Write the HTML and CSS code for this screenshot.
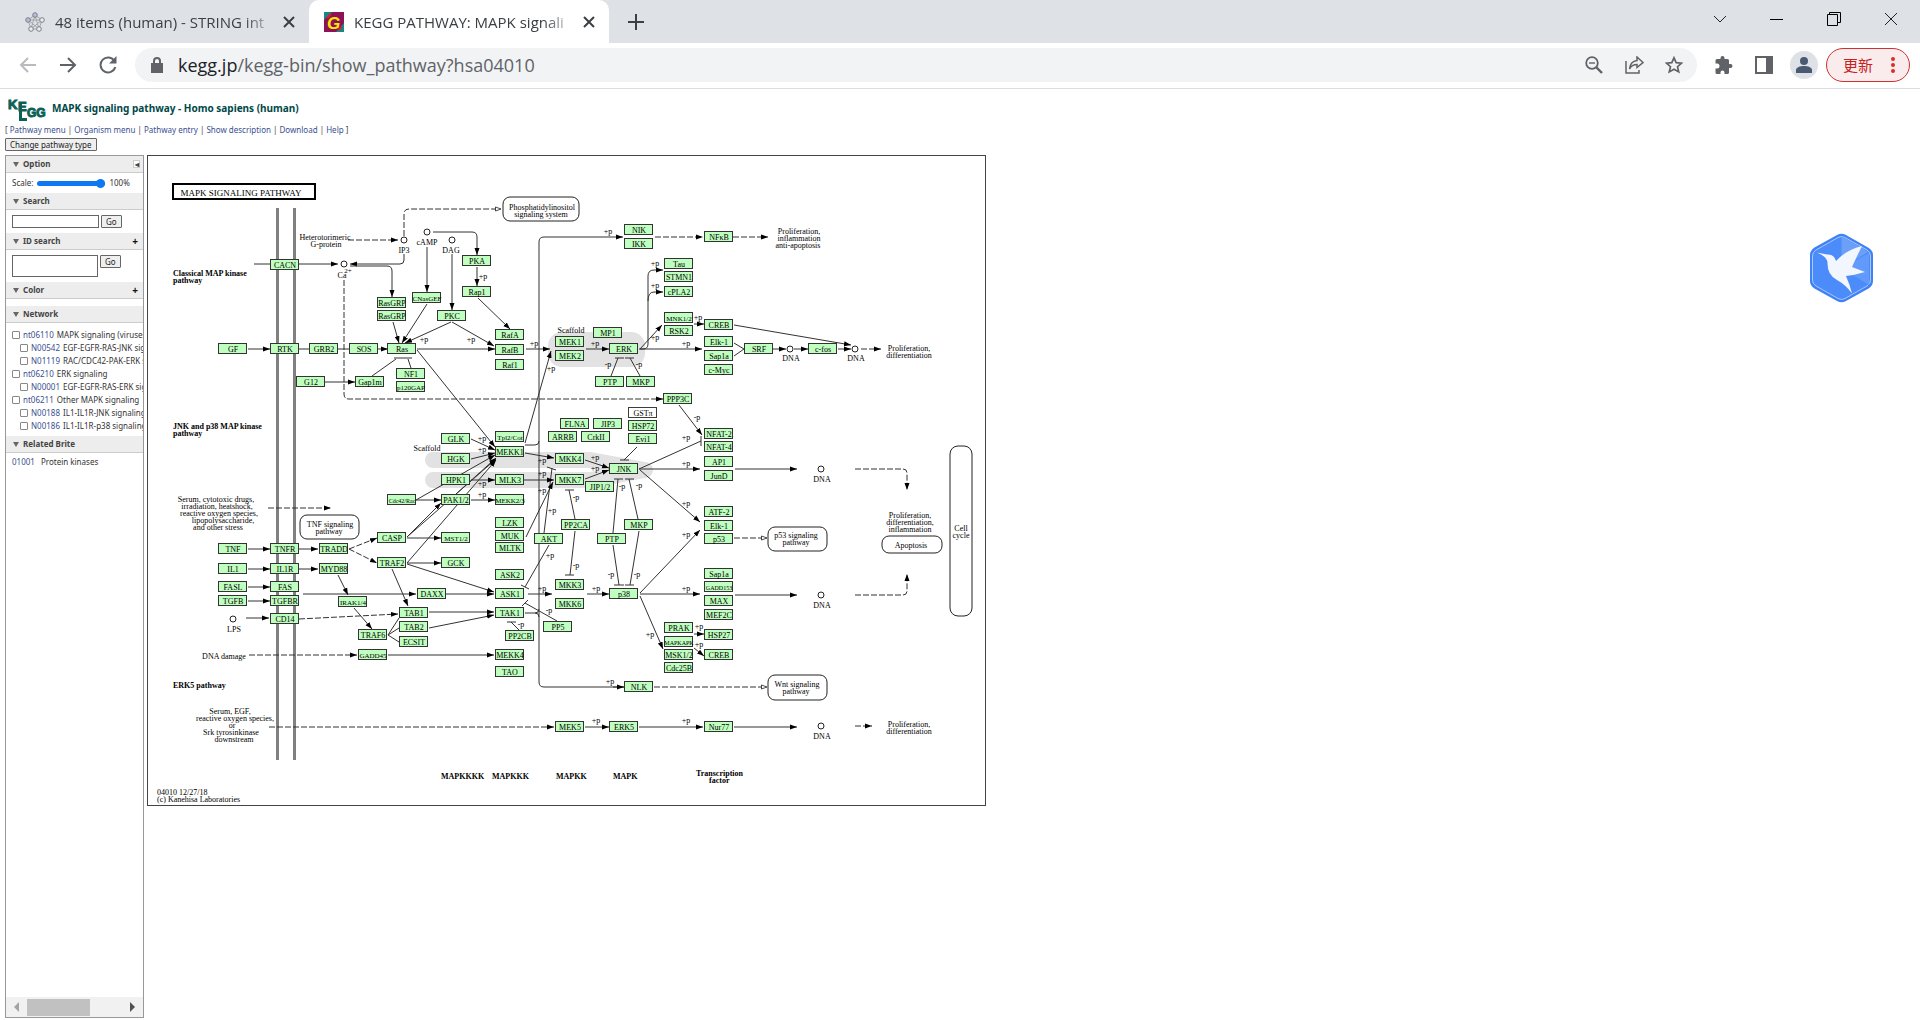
FILE: index.html
```html
<!DOCTYPE html>
<html lang="en">
<head>
<meta charset="utf-8">
<title>KEGG PATHWAY: MAPK signaling pathway - Homo sapiens (human)</title>
<link rel="stylesheet" href="styles.css">
</head>
<body>
<header class="browser">
  <div class="tabstrip">
    <div class="tab">
      <svg class="favicon" viewBox="0 0 20 20" aria-hidden="true"><path d="M10 3 3 8l3 9h8l3-9zM10 3 6 17M10 3l4 14M3 8h14L6 17M3 8l11 9" fill="none" stroke="#a3a6ab"/><g fill="#eceef1" stroke="#7d8085"><circle cx="10" cy="3" r="2.3" fill="#b4bde6"/><circle cx="3" cy="8" r="2.3" fill="#b4bde6"/><circle cx="17" cy="8" r="2.3"/><circle cx="6" cy="17" r="2.3"/><circle cx="14" cy="17" r="2.3"/></g></svg>
      <span class="tab-title">48 items (human) - STRING int</span>
      <button class="icon-btn" aria-label="Close tab"><svg width="12" height="12" viewBox="0 0 12 12"><path d="m1 1 10 10M11 1 1 11" stroke="#3c4043" stroke-width="2"/></svg></button>
    </div>
    <div class="tab active">
      <svg class="favicon" viewBox="0 0 20 20" aria-hidden="true"><path fill="#8e1256" d="M0 0h20v20H0z"/><path fill="#138a8a" d="M0 0h8L0 8zM12 20h8v-9z"/><path d="M3 6 7 2M14 18l4-3" stroke="#e02020" stroke-width="2"/><text x="3" y="17" class="fav-letter">G</text></svg>
      <span class="tab-title">KEGG PATHWAY: MAPK signali</span>
      <button class="icon-btn" aria-label="Close tab"><svg width="12" height="12" viewBox="0 0 12 12"><path d="m1 1 10 10M11 1 1 11" stroke="#3c4043" stroke-width="2"/></svg></button>
    </div>
    <button class="icon-btn new-tab" aria-label="New tab"><svg width="16" height="16" viewBox="0 0 16 16"><path d="M8 0v16M0 8h16" stroke="#3c4043" stroke-width="2"/></svg></button>
    <div class="window-controls">
      <button class="icon-btn" aria-label="Search tabs"><svg width="14" height="14" viewBox="0 0 14 14"><path d="m1 4 6 6 6-6" fill="none" stroke="#222"/></svg></button>
      <button class="icon-btn" aria-label="Minimize"><svg width="14" height="14" viewBox="0 0 14 14"><path d="M0 7.5h13" stroke="#000"/></svg></button>
      <button class="icon-btn" aria-label="Restore"><svg width="14" height="14" viewBox="0 0 14 14"><path d="M.5 2.5h10v11H.5zM2.5 2.5v-2h11v10h-3" fill="none" stroke="#000"/></svg></button>
      <button class="icon-btn" aria-label="Close"><svg width="14" height="14" viewBox="0 0 14 14"><path d="m1 1 12 12M13 1 1 13" stroke="#222"/></svg></button>
    </div>
  </div>
  <div class="toolbar">
    <button class="icon-btn nav" aria-label="Back"><svg width="18" height="18" viewBox="0 0 18 18"><path d="M17 9H2M9 2 2 9l7 7" fill="none" stroke="#b9bbbe" stroke-width="2"/></svg></button>
    <button class="icon-btn nav" aria-label="Forward"><svg width="18" height="18" viewBox="0 0 18 18"><path d="M1 9h15M9 2l7 7-7 7" fill="none" stroke="#5f6368" stroke-width="2"/></svg></button>
    <button class="icon-btn nav" aria-label="Reload"><svg width="18" height="18" viewBox="0 0 18 18"><path d="M15.5 5A7.5 7.5 0 1 0 16.300 11" fill="none" stroke="#5f6368" stroke-width="2"/><path d="M17.500 0v7.500H10z" fill="#5f6368"/></svg></button>
    <div class="omnibox">
      <svg width="12" height="16" viewBox="0 0 12 16" aria-hidden="true"><path d="M0 6h12v10H0z" fill="#5f6368"/><path d="M3 7V4a3 3 0 0 1 6 0v3" fill="none" stroke="#5f6368" stroke-width="2"/></svg>
      <a class="url" href="#top"><b>kegg.jp</b>/kegg-bin/show_pathway?hsa04010</a>
      <button class="icon-btn" aria-label="Zoom"><svg width="18" height="18" viewBox="0 0 18 18"><circle cx="7" cy="7" r="5.800" fill="none" stroke="#5f6368" stroke-width="1.800"/><path d="m11 11 6 6" stroke="#5f6368" stroke-width="2.400"/><path d="M4 7h6" stroke="#5f6368" stroke-width="1.400"/></svg></button>
      <button class="icon-btn" aria-label="Share"><svg width="19" height="18" viewBox="0 0 19 18"><path d="M1 5v12h13v-3M12 4.500V1l6 5.500-6 5V8.500C8 8.500 6 10 4.500 13 5 8 8 5 12 4.500z" fill="none" stroke="#5f6368" stroke-width="1.500"/></svg></button>
      <button class="icon-btn" aria-label="Bookmark"><svg width="18" height="18" viewBox="0 0 18 18"><path d="m9 1.800 2.200 4.900 5.300.5-4 3.500 1.200 5.200L9 13.200l-4.700 2.700 1.200-5.200-4-3.500 5.300-.5z" fill="none" stroke="#5f6368" stroke-width="1.700"/></svg></button>
    </div>
    <button class="icon-btn ext" aria-label="Extensions"><svg width="18" height="18" viewBox="0 0 18 18"><path fill="#5f6368" d="M15.500 8H14V4.500A1.500 1.500 0 0 0 12.500 3H9.500V2a2 2 0 0 0-4 0v1H2A1.500 1.500 0 0 0 .500 4.500v3H2a2 2 0 0 1 0 5H.500v4A1.500 1.500 0 0 0 2 18h3.500v-1.500a2 2 0 0 1 4 0V18h3a1.500 1.500 0 0 0 1.500-1.500V12h1.500a2 2 0 0 0 0-4z"/></svg></button>
    <button class="icon-btn ext" aria-label="Side panel"><svg width="18" height="18" viewBox="0 0 18 18"><path fill="#5f6368" fill-rule="evenodd" d="M0 0h18v18H0zM2 2v14h9V2z"/></svg></button>
    <button class="icon-btn avatar" aria-label="Profile"><svg width="16" height="16" viewBox="0 0 16 16"><circle cx="8" cy="4" r="4" fill="#4a5a73"/><path d="M0 16v-3c0-2.500 4-4 8-4s8 1.500 8 4v3z" fill="#4a5a73"/></svg></button>
    <button class="update">更新<svg width="4" height="16" viewBox="0 0 4 16" aria-hidden="true"><g fill="#d93025"><circle cx="2" cy="2" r="2"/><circle cx="2" cy="8" r="2"/><circle cx="2" cy="14" r="2"/></g></svg></button>
  </div>
</header>

<main id="top">
  <div class="title-row">
    <svg class="logo" width="38" height="25" viewBox="0 0 38 25" role="img" aria-label="KEGG"><text x="0" y="12" class="logo-k">K</text><text x="10" y="14" class="logo-e">E</text><path d="M11 5h3v16h5v3h-8z"/><text x="19" y="20" class="logo-g">GG</text></svg>
    <h1>MAPK signaling pathway - Homo sapiens (human)</h1>
  </div>
  <nav class="links">[ <a href="#menu">Pathway menu</a> | <a href="#org">Organism menu</a> | <a href="#entry">Pathway entry</a> | <a href="#desc">Show description</a> | <a href="#dl">Download</a> | <a href="#help">Help</a> ]</nav>
  <button class="plain-btn change">Change pathway type</button>

  <div class="workspace">
    <aside class="panel">
      <h2>Option<button class="collapse" aria-label="Collapse panel">◂</button></h2>
      <div class="row scale"><label for="scale">Scale:</label><input id="scale" type="range" min="10" max="100" value="100"><output>100%</output></div>
      <h2>Search</h2>
      <div class="row form"><input type="text" aria-label="Search"><button class="plain-btn">Go</button></div>
      <h2>ID search<span class="plus">+</span></h2>
      <div class="row form"><textarea aria-label="ID search"></textarea><button class="plain-btn">Go</button></div>
      <h2>Color<span class="plus">+</span></h2>
      <div class="spacer"></div>
      <h2>Network</h2>
      <ul class="network">
        <li><input type="checkbox" id="n1"><label for="n1"><a href="#n">nt06110</a> MAPK signaling (viruses)</label></li>
        <li class="sub"><input type="checkbox" id="n2"><label for="n2"><a href="#n">N00542</a> EGF-EGFR-RAS-JNK signaling</label></li>
        <li class="sub"><input type="checkbox" id="n3"><label for="n3"><a href="#n">N01119</a> RAC/CDC42-PAK-ERK signaling</label></li>
        <li><input type="checkbox" id="n4"><label for="n4"><a href="#n">nt06210</a> ERK signaling</label></li>
        <li class="sub"><input type="checkbox" id="n5"><label for="n5"><a href="#n">N00001</a> EGF-EGFR-RAS-ERK signaling</label></li>
        <li><input type="checkbox" id="n6"><label for="n6"><a href="#n">nt06211</a> Other MAPK signaling</label></li>
        <li class="sub"><input type="checkbox" id="n7"><label for="n7"><a href="#n">N00188</a> IL1-IL1R-JNK signaling</label></li>
        <li class="sub"><input type="checkbox" id="n8"><label for="n8"><a href="#n">N00186</a> IL1-IL1R-p38 signaling</label></li>
      </ul>
      <h2>Related Brite</h2>
      <p class="brite"><a href="#b">01001</a> Protein kinases</p>
      <div class="scrollbar" aria-hidden="true"><i class="arrow-left"></i><span class="thumb"></span><i class="arrow-right"></i></div>
    </aside>

    <svg class="pathway" width="839" height="651" viewBox="147 155 839 651" role="img" aria-label="MAPK signaling pathway map">
      <defs>
        <rect id="g" class="gene" x="-14.500" y="-5.500" width="28" height="10"/>
        <circle id="c" class="shape" r="3"/>
        <marker id="a" viewBox="0 0 7 6" refX="7" refY="3" markerWidth="7" markerHeight="6" markerUnits="userSpaceOnUse" orient="auto"><path d="M0 .500 7 3 0 5.500z"/></marker>
        <marker id="o" viewBox="0 0 7 6" refX="1" refY="3" markerWidth="7" markerHeight="6" markerUnits="userSpaceOnUse" orient="auto"><path d="M.500 1 6 3 .500 5z" fill="#fff" stroke="#000" stroke-width=".700"/></marker>
      </defs>

      <g class="scaffold"><rect x="548" y="332" width="97" height="35" rx="14"/><path d="M433 460H590L645 470M433 480H590L645 470"/></g>
      <path class="membrane" d="M277.500 208V760M294.500 208V760"/>

      <g class="shape">
        <rect x="173" y="184" width="142" height="15" class="title-box"/>
        <rect x="503" y="197" width="76" height="24" rx="7"/>
        <rect x="300" y="515" width="59" height="24" rx="7"/>
        <rect x="768" y="527" width="59" height="24" rx="7"/>
        <rect x="768" y="675" width="59" height="25" rx="7"/>
        <rect x="882" y="536" width="60" height="17" rx="7"/>
        <rect x="950" y="446" width="22" height="170" rx="8"/>
      </g>

      <g class="edge">
        <path d="M254 264H270"/><path d="M299 349H309M338 349H349"/>
        <path d="M372 376 396 359M411 368 408 359M394 358H412"/>
        <path d="M611 376 618 358M615 358H624M640 376 630 358M625 358H634"/>
        <path d="M525 445H535q4 0 4-4"/><path d="M525 613H535q4 0 4 4M535 613q4 0 4-4"/>
        <path d="M734 343 744 349 734 356"/>
        <path d="M639 469 701 441M701 436V446"/>
        <path d="M637 447 624 460M620 460H629"/>
        <path d="M613 533 618 479M614 479H623M638 519 629 479M625 479H634M613 545 619 585M614 585H624M639 531 630 585M625 585H634"/>
        <path d="M575 519 569 490M565 490H574M575 531 570 575M565 575H574"/>
        <path d="M544 533 552 468M547 467 556 470M549 545 525 587M521 585 529 589"/>
        <path d="M388 635 399 618M388 635 399 628M388 635 399 642"/>
        <path d="M519 630 511 622M507 622H516M557 621 525 603M522 606 528 600"/>
      </g>

      <g class="edge arrow">
        <path d="M299 264H338"/><path d="M404 254V260q0 4-4 4H350"/><path d="M350 266H387q5 0 5 5V297"/>
        <path d="M433 232H472q5 0 5 5V255"/><path d="M427 247V292"/><path d="M452 254V310"/><path d="M477 267V286"/><path d="M478 298 510 329"/>
        <path d="M393 322 399 343"/><path d="M427 304 402 343"/><path d="M451 322 405 343"/><path d="M452 322 494 346"/>
        <path d="M248 349H270"/><path d="M378 349H388"/><path d="M417 349H495"/><path d="M325 382H355"/>
        <path d="M417 350 495 447"/><path d="M526 349H550"/><path d="M525 443 551 351"/>
        <path d="M624 687H544q-5 0-5-5V242q0-5 5-5H623"/>
        <path d="M613 687H624"/>
        <path d="M640 349H643q5 0 5-5V276q0-6 6-6H663"/><path d="M648 301q0-9 6-9H663"/><path d="M640 349 662 325"/><path d="M639 349H702"/><path d="M694 324H704"/>
        <path d="M734 325 851 345"/><path d="M773 349H786"/><path d="M794 349H808"/><path d="M838 349H851"/><path d="M586 349H609"/>
        <path d="M679 405 702 435"/><path d="M639 469H700"/><path d="M640 470 700 522"/><path d="M640 593 700 530"/><path d="M640 594H700"/><path d="M640 596 663 649"/>
        <path d="M735 469H797"/><path d="M735 595H797"/><path d="M694 634H704"/><path d="M694 648 704 656"/>
        <path d="M526 537 553 482"/><path d="M524 480H554"/><path d="M525 453 554 458"/><path d="M585 460 609 468"/><path d="M585 479 609 470"/>
        <path d="M471 439 495 450"/><path d="M471 459 495 453"/><path d="M471 480H495"/><path d="M416 500 495 455"/><path d="M416 500H441"/><path d="M456 494 496 458"/><path d="M471 500H495"/>
        <path d="M407 537 441 503"/><path d="M407 537 496 459"/><path d="M407 538H441"/><path d="M407 563 496 460"/><path d="M407 563H441"/><path d="M407 564 494 592"/><path d="M392 569 408 606"/>
        <path d="M303 594H416"/><path d="M446 594H494"/><path d="M528 594H552"/><path d="M587 594H609"/><path d="M429 612H494"/><path d="M429 628 494 615"/><path d="M388 655H494"/>
        <path d="M248 549H270"/><path d="M248 569H270"/><path d="M248 587H270"/><path d="M248 601H270"/><path d="M246 618H269"/><path d="M299 549H318"/><path d="M299 569H318"/>
        <path d="M338 575 348 595"/><path d="M354 608 372 629"/>
        <path d="M585 727H609"/><path d="M639 727H703"/><path d="M734 727H797"/>
      </g>
      <g class="edge arrow dashed">
        <path d="M348 240H398"/><path d="M344 280V394q0 5 5 5H663"/><path d="M655 237H703"/><path d="M733 237H768"/><path d="M861 349H881"/>
        <path d="M855 469H903q4 0 4 4V490"/><path d="M855 595H903q4 0 4-4V574"/>
        <path d="M299 619 398 614"/><path d="M349 549 377 538"/><path d="M349 549 377 563"/><path d="M249 655H357"/><path d="M268 508H331"/><path d="M269 727H554"/><path d="M855 726H872"/>
      </g>
      <g class="edge open dashed"><path d="M404 236V214q0-5 5-5H496"/><path d="M734 538H762"/><path d="M654 687H762"/></g>

      <use href="#c" x="344" y="264"/><use href="#c" x="404" y="240"/><use href="#c" x="427" y="232"/><use href="#c" x="452" y="240"/><use href="#c" x="790" y="349"/><use href="#c" x="855" y="349"/><use href="#c" x="821" y="469"/><use href="#c" x="821" y="595"/><use href="#c" x="821" y="726"/><use href="#c" x="233" y="619"/>

      <g class="names">
        <use href="#g" x="285" y="265"/><text x="285" y="268">CACN</text>
        <use href="#g" x="233" y="349"/><text x="233" y="352">GF</text>
        <use href="#g" x="285" y="349"/><text x="285" y="352">RTK</text>
        <use href="#g" x="324" y="349"/><text x="324" y="352">GRB2</text>
        <use href="#g" x="364" y="349"/><text x="364" y="352">SOS</text>
        <use href="#g" x="402" y="349"/><text x="402" y="352">Ras</text>
        <use href="#g" x="311" y="382"/><text x="311" y="385">G12</text>
        <use href="#g" x="370" y="382"/><text x="370" y="385">Gap1m</text>
        <use href="#g" x="392" y="303"/><text x="392" y="306">RasGRP</text>
        <use href="#g" x="392" y="316"/><text x="392" y="319">RasGRP</text>
        <use href="#g" x="427" y="298"/><text x="427" y="301" class="long">CNasGEF</text>
        <use href="#g" x="452" y="316"/><text x="452" y="319">PKC</text>
        <use href="#g" x="477" y="261"/><text x="477" y="264">PKA</text>
        <use href="#g" x="477" y="292"/><text x="477" y="295">Rap1</text>
        <use href="#g" x="411" y="374"/><text x="411" y="377">NF1</text>
        <use href="#g" x="411" y="387"/><text x="411" y="390" class="long">p120GAP</text>
        <use href="#g" x="510" y="335"/><text x="510" y="338">RafA</text>
        <use href="#g" x="510" y="350"/><text x="510" y="353">RafB</text>
        <use href="#g" x="510" y="365"/><text x="510" y="368">Raf1</text>
        <use href="#g" x="570" y="342"/><text x="570" y="345">MEK1</text>
        <use href="#g" x="570" y="356"/><text x="570" y="359">MEK2</text>
        <use href="#g" x="608" y="333"/><text x="608" y="336">MP1</text>
        <use href="#g" x="624" y="349"/><text x="624" y="352">ERK</text>
        <use href="#g" x="610" y="382"/><text x="610" y="385">PTP</text>
        <use href="#g" x="641" y="382"/><text x="641" y="385">MKP</text>
        <use href="#g" x="639" y="230"/><text x="639" y="233">NIK</text>
        <use href="#g" x="639" y="244"/><text x="639" y="247">IKK</text>
        <use href="#g" x="719" y="237"/><text x="719" y="240">NFκB</text>
        <use href="#g" x="679" y="264"/><text x="679" y="267">Tau</text>
        <use href="#g" x="679" y="277"/><text x="679" y="280">STMN1</text>
        <use href="#g" x="679" y="292"/><text x="679" y="295">cPLA2</text>
        <use href="#g" x="679" y="318"/><text x="679" y="321" class="long">MNK1/2</text>
        <use href="#g" x="679" y="331"/><text x="679" y="334">RSK2</text>
        <use href="#g" x="719" y="325"/><text x="719" y="328">CREB</text>
        <use href="#g" x="719" y="342"/><text x="719" y="345">Elk-1</text>
        <use href="#g" x="719" y="356"/><text x="719" y="359">Sap1a</text>
        <use href="#g" x="719" y="370"/><text x="719" y="373">c-Myc</text>
        <use href="#g" x="678" y="399"/><text x="678" y="402">PPP3C</text>
        <use href="#g" x="759" y="349"/><text x="759" y="352">SRF</text>
        <use href="#g" x="823" y="349"/><text x="823" y="352">c-fos</text>
        <use href="#g" x="456" y="439"/><text x="456" y="442">GLK</text>
        <use href="#g" x="456" y="459"/><text x="456" y="462">HGK</text>
        <use href="#g" x="456" y="480"/><text x="456" y="483">HPK1</text>
        <use href="#g" x="456" y="500"/><text x="456" y="503">PAK1/2</text>
        <use href="#g" x="456" y="538"/><text x="456" y="541" class="long">MST1/2</text>
        <use href="#g" x="456" y="563"/><text x="456" y="566">GCK</text>
        <use href="#g" x="510" y="437"/><text x="510" y="440" class="long">Tpl2/Cot</text>
        <use href="#g" x="510" y="452"/><text x="510" y="455">MEKK1</text>
        <use href="#g" x="510" y="480"/><text x="510" y="483">MLK3</text>
        <use href="#g" x="510" y="500"/><text x="510" y="503" class="long">MEKK2/3</text>
        <use href="#g" x="510" y="523"/><text x="510" y="526">LZK</text>
        <use href="#g" x="510" y="536"/><text x="510" y="539">MUK</text>
        <use href="#g" x="510" y="548"/><text x="510" y="551">MLTK</text>
        <use href="#g" x="510" y="575"/><text x="510" y="578">ASK2</text>
        <use href="#g" x="510" y="594"/><text x="510" y="597">ASK1</text>
        <use href="#g" x="510" y="613"/><text x="510" y="616">TAK1</text>
        <use href="#g" x="520" y="636"/><text x="520" y="639">PP2CB</text>
        <use href="#g" x="510" y="655"/><text x="510" y="658">MEKK4</text>
        <use href="#g" x="510" y="672"/><text x="510" y="675">TAO</text>
        <use href="#g" x="402" y="500"/><text x="402" y="503" class="longest">Cdc42/Rac</text>
        <use href="#g" x="392" y="538"/><text x="392" y="541">CASP</text>
        <use href="#g" x="392" y="563"/><text x="392" y="566">TRAF2</text>
        <use href="#g" x="432" y="594"/><text x="432" y="597">DAXX</text>
        <use href="#g" x="414" y="613"/><text x="414" y="616">TAB1</text>
        <use href="#g" x="414" y="627"/><text x="414" y="630">TAB2</text>
        <use href="#g" x="414" y="642"/><text x="414" y="645">ECSIT</text>
        <use href="#g" x="575" y="424"/><text x="575" y="427">FLNA</text>
        <use href="#g" x="608" y="424"/><text x="608" y="427">JIP3</text>
        <use href="#g" x="563" y="437"/><text x="563" y="440">ARRB</text>
        <use href="#g" x="596" y="437"/><text x="596" y="440">CrkII</text>
        <use href="#g" x="570" y="459"/><text x="570" y="462">MKK4</text>
        <use href="#g" x="570" y="480"/><text x="570" y="483">MKK7</text>
        <use href="#g" x="624" y="469"/><text x="624" y="472">JNK</text>
        <use href="#g" x="600" y="487"/><text x="600" y="490">JIP1/2</text>
        <use href="#g" x="576" y="525"/><text x="576" y="528">PP2CA</text>
        <use href="#g" x="549" y="539"/><text x="549" y="542">AKT</text>
        <use href="#g" x="612" y="539"/><text x="612" y="542">PTP</text>
        <use href="#g" x="639" y="525"/><text x="639" y="528">MKP</text>
        <use href="#g" x="570" y="585"/><text x="570" y="588">MKK3</text>
        <use href="#g" x="570" y="604"/><text x="570" y="607">MKK6</text>
        <use href="#g" x="558" y="627"/><text x="558" y="630">PP5</text>
        <use href="#g" x="624" y="594"/><text x="624" y="597">p38</text>
        <use href="#g" x="643" y="413" class="plain"/><text x="643" y="416">GSTπ</text>
        <use href="#g" x="643" y="426"/><text x="643" y="429">HSP72</text>
        <use href="#g" x="643" y="439"/><text x="643" y="442">Evi1</text>
        <use href="#g" x="719" y="434"/><text x="719" y="437">NFAT-2</text>
        <use href="#g" x="719" y="447"/><text x="719" y="450">NFAT-4</text>
        <use href="#g" x="719" y="462"/><text x="719" y="465">AP1</text>
        <use href="#g" x="719" y="476"/><text x="719" y="479">JunD</text>
        <use href="#g" x="719" y="512"/><text x="719" y="515">ATF-2</text>
        <use href="#g" x="719" y="526"/><text x="719" y="529">Elk-1</text>
        <use href="#g" x="719" y="539"/><text x="719" y="542">p53</text>
        <use href="#g" x="719" y="574"/><text x="719" y="577">Sap1a</text>
        <use href="#g" x="719" y="587"/><text x="719" y="590" class="longest">GADD153</text>
        <use href="#g" x="719" y="601"/><text x="719" y="604">MAX</text>
        <use href="#g" x="719" y="615"/><text x="719" y="618">MEF2C</text>
        <use href="#g" x="679" y="628"/><text x="679" y="631">PRAK</text>
        <use href="#g" x="679" y="642"/><text x="679" y="645" class="longest">MAPKAPK</text>
        <use href="#g" x="679" y="655"/><text x="679" y="658">MSK1/2</text>
        <use href="#g" x="679" y="668"/><text x="679" y="671">Cdc25B</text>
        <use href="#g" x="719" y="635"/><text x="719" y="638">HSP27</text>
        <use href="#g" x="719" y="655"/><text x="719" y="658">CREB</text>
        <use href="#g" x="233" y="549"/><text x="233" y="552">TNF</text>
        <use href="#g" x="233" y="569"/><text x="233" y="572">IL1</text>
        <use href="#g" x="233" y="587"/><text x="233" y="590">FASL</text>
        <use href="#g" x="233" y="601"/><text x="233" y="604">TGFB</text>
        <use href="#g" x="285" y="549"/><text x="285" y="552">TNFR</text>
        <use href="#g" x="285" y="569"/><text x="285" y="572">IL1R</text>
        <use href="#g" x="285" y="587"/><text x="285" y="590">FAS</text>
        <use href="#g" x="285" y="601"/><text x="285" y="604">TGFBR</text>
        <use href="#g" x="285" y="619"/><text x="285" y="622">CD14</text>
        <use href="#g" x="334" y="549"/><text x="334" y="552">TRADD</text>
        <use href="#g" x="334" y="569"/><text x="334" y="572">MYD88</text>
        <use href="#g" x="353" y="602"/><text x="353" y="605" class="long">IRAK1/4</text>
        <use href="#g" x="373" y="635"/><text x="373" y="638">TRAF6</text>
        <use href="#g" x="373" y="655"/><text x="373" y="658" class="long">GADD45</text>
        <use href="#g" x="639" y="687"/><text x="639" y="690">NLK</text>
        <use href="#g" x="570" y="727"/><text x="570" y="730">MEK5</text>
        <use href="#g" x="624" y="727"/><text x="624" y="730">ERK5</text>
        <use href="#g" x="719" y="727"/><text x="719" y="730">Nur77</text>
      </g>

      <g class="names">
        <text x="483" y="279">+p</text><text x="424" y="342">+p</text><text x="471" y="342">+p</text><text x="608" y="234">+p</text><text x="655" y="266">+p</text><text x="655" y="288">+p</text><text x="698" y="320">+p</text><text x="655" y="340">+p</text><text x="686" y="346">+p</text><text x="595" y="346">+p</text><text x="534" y="346">+p</text><text x="551" y="371">+p</text><text x="608" y="367">-p</text><text x="639" y="367">-p</text><text x="697" y="420">-p</text><text x="686" y="440">+p</text><text x="686" y="466">+p</text><text x="686" y="506">+p</text><text x="686" y="537">+p</text><text x="686" y="591">+p</text><text x="650" y="637">+p</text><text x="699" y="629">+p</text><text x="699" y="647">+p</text><text x="639" y="488">-p</text><text x="637" y="577">-p</text><text x="482" y="441">+p</text><text x="482" y="452">+p</text><text x="482" y="486">+p</text><text x="482" y="497">+p</text><text x="542" y="463">+p</text><text x="542" y="476">+p</text><text x="542" y="493">+p</text><text x="552" y="513">+p</text><text x="550" y="558">+p</text><text x="595" y="460">+p</text><text x="595" y="471">+p</text><text x="576" y="500">-p</text><text x="576" y="568">-p</text><text x="622" y="489">-p</text><text x="611" y="577">-p</text><text x="542" y="591">+p</text><text x="596" y="591">+p</text><text x="549" y="613">-p</text><text x="521" y="627">-p</text><text x="610" y="684">+p</text><text x="596" y="723">+p</text><text x="686" y="723">+p</text>
        <text x="542" y="210">Phosphatidylinositol</text><text x="541" y="217">signaling system</text>
        <text x="325" y="240">Heterotorimeric</text><text x="326" y="247">G-protein</text>
        <text x="404" y="253">IP3</text><text x="427" y="245">cAMP</text><text x="451" y="253">DAG</text><text x="342" y="278">Ca</text><text x="348" y="273" class="long">2+</text>
        <text x="571" y="333">Scaffold</text><text x="427" y="451">Scaffold</text>
        <text x="799" y="234">Proliferation,</text><text x="799" y="241">inflammation</text><text x="798" y="248">anti-apoptosis</text>
        <text x="791" y="361">DNA</text><text x="856" y="361">DNA</text><text x="909" y="351">Proliferation,</text><text x="909" y="358">differentiation</text>
        <text x="822" y="482">DNA</text><text x="822" y="608">DNA</text><text x="822" y="739">DNA</text>
        <text x="910" y="518">Proliferation,</text><text x="910" y="525">differentiation,</text><text x="910" y="532">inflammation</text><text x="911" y="548">Apoptosis</text>
        <text x="961" y="531">Cell</text><text x="961" y="538">cycle</text>
        <text x="796" y="538">p53 signaling</text><text x="796" y="545">pathway</text>
        <text x="797" y="687">Wnt signaling</text><text x="796" y="694">pathway</text>
        <text x="909" y="727">Proliferation,</text><text x="909" y="734">differentiation</text>
        <text x="330" y="527">TNF signaling</text><text x="329" y="534">pathway</text>
        <text x="216" y="502">Serum, cytotoxic drugs,</text><text x="217" y="509">irradiation, heatshock,</text><text x="219" y="516">reactive oxygen species,</text><text x="223" y="523">lipopolysaccharide,</text><text x="218" y="530">and other stress</text>
        <text x="234" y="632">LPS</text><text x="224" y="659">DNA damage</text>
        <text x="230" y="714">Serum, EGF,</text><text x="235" y="721">reactive oxygen species,</text><text x="232" y="728">or</text><text x="231" y="735">Srk tyrosinkinase</text><text x="234" y="742">downstream</text>
        <text x="241" y="196" class="map-title">MAPK SIGNALING PATHWAY</text>
      </g>
      <g class="heads">
        <text x="173" y="276">Classical MAP kinase</text><text x="173" y="283">pathway</text>
        <text x="173" y="429">JNK and p38 MAP kinase</text><text x="173" y="436">pathway</text>
        <text x="173" y="688">ERK5 pathway</text>
        <text x="441" y="779">MAPKKKK</text><text x="492" y="779">MAPKKK</text><text x="556" y="779">MAPKK</text><text x="613" y="779">MAPK</text>
        <text x="696" y="776">Transcription</text><text x="709" y="783">factor</text>
      </g>
      <g class="credit"><text x="157" y="795">04010 12/27/18</text><text x="157" y="802">(c) Kanehisa Laboratories</text></g>
      <rect class="frame" x="147.500" y="155.500" width="838" height="650"/>
    </svg>
  </div>
</main>

<a class="bird" href="#assistant" aria-label="Assistant">
  <svg width="63" height="70" viewBox="0 0 63 70"><path d="M27 2Q31.500-.500 36 2L58 14.500Q63 17.500 63 22V48Q63 53 58.500 55.500L36 68Q31.500 70.500 27 68L4.500 55.500Q0 53 0 48V22Q0 17.500 4.500 14.500z" fill="#3f82f6"/><path d="M28 4.500Q31.500 2.500 35 4.500L57 17Q60.500 19 60.500 23V47Q60.500 51 57 53L35 65.500Q31.500 67.500 28 65.500L6 53Q2.500 51 2.500 47V23Q2.500 19 6 17z" fill="#4b8bfa" stroke="#a8c8ff"/><path d="M31.500 4V35L58 19 35 5z" fill="#6b9ff8"/><path d="M31.500 35 59 52V20z" fill="#619afa"/><path d="M7 19.500 17 21.500Q24 20.500 26 28 36 17 52 13 47 23 42 34 L55 39Q45 42 36 43 40 52 42 60.500 36 52 27 47 17 42 17.500 29 16 23 7 19.500z" fill="#f2f6ff"/></svg>
</a>
</body>
</html>
```
FILE: styles.css
```css
* { box-sizing: border-box; }
body {
  margin: 0;
  min-height: 100vh;
  display: flex;
  flex-direction: column;
  position: relative;
  background: #fff;
  color: #333;
  font: 8px/12px "Noto Sans", "Open Sans", sans-serif;
}
button, input, textarea { font: inherit; margin: 0; }
a { color: #3a4f8f; text-decoration: none; }

/* Browser chrome */
.icon-btn {
  display: inline-flex;
  align-items: center;
  justify-content: center;
  padding: 0;
  border: 0;
  background: none;
}
.tabstrip { display: flex; height: 43px; background: #dee1e6; }
.tab {
  display: flex;
  align-items: center;
  width: 300px;
  padding: 0 14px 0 15px;
  color: #3c4043;
  font: 15px/24px "Open Sans", "Noto Sans", sans-serif;
}
.tab:first-child { width: 309px; padding-left: 25px; }
.tab.active { background: #fff; border-radius: 10px 10px 0 0; }
.favicon { width: 20px; height: 20px; flex: none; }
.fav-letter { font: italic bold 17px "Liberation Sans", sans-serif; fill: #ffe800; }
.tab-title {
  flex: 1;
  margin: 0 6px 0 10px;
  overflow: hidden;
  white-space: nowrap;
  mask-image: linear-gradient(90deg, #000 85%, transparent);
}
.tab .icon-btn { flex: none; }
.new-tab { width: 54px; }
.window-controls { display: flex; margin-left: auto; padding-right: 1px; padding-bottom: 6px; }
.window-controls .icon-btn { width: 57px; }
.toolbar {
  display: flex;
  align-items: center;
  height: 46px;
  padding: 0 10px 2px 8px;
  border-bottom: 1px solid #dadce0;
}
.nav { width: 40px; }
.omnibox {
  flex: 1;
  display: flex;
  align-items: center;
  height: 34px;
  margin-left: 7px;
  padding: 0 3px 0 16px;
  border-radius: 17px;
  background: #f1f3f4;
}
.omnibox .icon-btn { width: 40px; }
.url {
  flex: 1;
  padding-left: 15px;
  color: #5f6368;
  font: 18px/24px "Open Sans", "Noto Sans", sans-serif;
}
.url b { font-weight: 400; color: #202124; }
.ext { width: 40px; }
.ext:nth-of-type(4) { margin-left: 7px; }
.avatar { width: 28px; height: 28px; margin: 0 8px 0 6px; border-radius: 50%; background: #dee1e6; }
.update {
  display: flex;
  align-items: center;
  justify-content: space-between;
  width: 84px;
  height: 34px;
  padding: 0 14px 0 16px;
  border: 1px solid #d03030;
  border-radius: 17px;
  background: #faecec;
  color: #c5221f;
  font: 15px/20px "Noto Sans CJK SC", sans-serif;
}

/* Page header */
main { flex: 1; display: flex; flex-direction: column; align-items: flex-start; padding: 7px 5px 2px; }
.title-row { display: flex; align-items: center; gap: 6px; height: 26px; padding-left: 3px; }
.logo text { font-family: "Liberation Sans", sans-serif; font-weight: bold; fill: #0b6156; stroke: #0b6156; }
.logo path { fill: #0b6156; }
.logo .logo-k { font-size: 13px; }
.logo .logo-e { font-size: 13px; }
.logo .logo-g { font-size: 12px; }
h1 { margin: 0 0 3px; color: #004848; font-size: 10px; line-height: 16px; }
.links { line-height: 16px; color: #444; }
.plain-btn {
  padding: 0 4px;
  border: 1px solid #666;
  border-radius: 1px;
  background: #efefef;
  color: #222;
  line-height: 11px;
}
.change { margin-bottom: 4px; }
.workspace { flex: 1; align-self: stretch; display: flex; align-items: stretch; gap: 3px; }

/* Side panel */
.panel {
  display: flex;
  flex-direction: column;
  flex: none;
  width: 139px;
  overflow: hidden;
  border: 1px solid #999;
}
h2 {
  display: flex;
  align-items: center;
  height: 17px;
  margin: 0;
  padding: 0 5px 0 7px;
  border-bottom: 1px solid #ccc;
  background: #ededed;
  color: #444;
  font-size: 8px;
}
h2::before {
  content: "";
  margin-right: 4px;
  border: 3px solid transparent;
  border-top: 5px solid #666;
  border-bottom: 0;
}
.plus { margin-left: auto; color: #111; font-size: 10px; }
.collapse {
  margin: 0 -2px 0 auto;
  width: 7px;
  height: 8px;
  padding: 0;
  border: 1px solid #ccc;
  background: #fff;
  color: #444;
  line-height: 6px;
}
.row { display: flex; padding: 0 6px; }
.scale { align-items: center; height: 20px; gap: 4px; }
.scale input { width: 68px; height: 9px; appearance: none; background: none; }
.scale input::-webkit-slider-runnable-track { height: 5px; border-radius: 3px; background: #0d78f2; }
.scale input::-webkit-slider-thumb { appearance: none; width: 9px; height: 9px; margin-top: -2px; border-radius: 50%; background: #0d78f2; }
.form { align-items: flex-start; gap: 2px; padding-top: 5px; padding-bottom: 5px; }
.form input { width: 87px; height: 13px; padding: 0 2px; border: 1px solid #666; }
.form textarea { width: 86px; height: 22px; padding: 0 2px; border: 1px solid #666; resize: none; }
.spacer { height: 7px; }
.network { margin: 0; padding: 5px 0 4px 6px; list-style: none; white-space: nowrap; }
.network li { display: flex; align-items: center; height: 13px; gap: 3px; }
.network .sub { padding-left: 8px; }
.network a { margin-right: 1px; }
.network input { flex: none; width: 8px; height: 8px; appearance: none; border: 1px solid #888; border-radius: 1px; background: #fff; }
.brite { margin: 0; padding: 3px 6px; }
.brite a { margin-right: 4px; }
.scrollbar { display: flex; align-items: center; gap: 8px; height: 20px; margin-top: auto; padding: 0 8px; background: #f1f1f1; }
.thumb { width: 63px; height: 17px; background: #c1c1c1; }
.arrow-left { border: 5px solid transparent; border-left: 0; border-right-color: #a3a3a3; }
.arrow-right { margin-left: auto; border: 5px solid transparent; border-right: 0; border-left-color: #505050; }

/* Pathway map */
.pathway { flex: none; font: 8px "Liberation Serif", serif; }
.frame { fill: none; stroke: #444; stroke-width: 1; }
.gene { fill: #bfffbf; stroke: #333; }
.plain { filter: grayscale(1) brightness(1.2); }
.shape { fill: #fff; stroke: #222; }
.title-box { stroke: #000; stroke-width: 2; }
.scaffold { fill: #e2e2e2; }
.scaffold path { fill: none; stroke: #e2e2e2; stroke-width: 16; stroke-linecap: round; }
.membrane { stroke: #808080; stroke-width: 3; }
.edge { fill: none; stroke: #333; stroke-width: 1; }
.arrow path { marker-end: url(#a); }
.open path { marker-end: url(#o); }
.dashed path { stroke-dasharray: 6 2; }
.names { text-anchor: middle; }
.names .long { font-size: 7px; }
.names .longest { font-size: 6px; }
.names .map-title { font-size: 9px; }
.heads { font-weight: bold; }

.bird { position: absolute; top: 233px; right: 47px; }
.bird svg { display: block; }
```
